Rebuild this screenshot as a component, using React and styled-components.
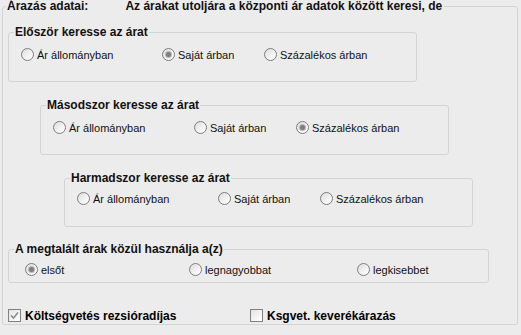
import React from 'react'
import styled, { createGlobalStyle } from 'styled-components'

const GlobalStyle = createGlobalStyle`
  * { box-sizing: border-box; }
  html, body {
    margin: 0;
    background: #ececec;
    font-family: "Liberation Sans", Arial, sans-serif;
    color: #000;
  }
`

const groups = [
  {
    title: 'Először keresse az árat',
    left: 5,
    top: 13,
    selected: 1,
    rowTop: 9,
    bottom: 20,
    options: ['Ár állományban', 'Saját árban', 'Százalékos árban'],
  },
  {
    title: 'Másodszor keresse az árat',
    left: 37,
    top: 17,
    selected: 2,
    rowTop: 9,
    bottom: 20,
    options: ['Ár állományban', 'Saját árban', 'Százalékos árban'],
  },
  {
    title: 'Harmadszor keresse az árat',
    left: 61,
    top: 17,
    selected: -1,
    rowTop: 7,
    bottom: 21,
    options: ['Ár állományban', 'Saját árban', 'Százalékos árban'],
  },
]

export default function App() {
  return (
    <>
      <GlobalStyle />
      <Outer>
        <OuterLegend>
          <span>Árazás adatai:</span>
          <LegendNote>Az árakat utoljára a központi ár adatok között keresi, de</LegendNote>
        </OuterLegend>

        {groups.map((g) => (
          <Group key={g.title} $left={g.left} $top={g.top} $width={409} $bottom={g.bottom}>
            <GroupLegend>{g.title}</GroupLegend>
            <Options $top={g.rowTop} $pad={12} $cols="141px 102px 1fr">
              {g.options.map((o, i) => (
                <Radio key={o} label={o} checked={i === g.selected} />
              ))}
            </Options>
          </Group>
        ))}

        <Group $left={5} $top={16} $width={481} $bottom={6}>
          <GroupLegend>A megtalált árak közül használja a(z)</GroupLegend>
          <Options $top={7} $pad={16} $cols="164px 168px 1fr">
            <Radio label="elsőt" checked />
            <Radio label="legnagyobbat" />
            <Radio label="legkisebbet" />
          </Options>
        </Group>

        <CheckRow>
          <Check checked label="Költségvetés rezsióradíjas" />
          <Check label="Ksgvet. keverékárazás" />
        </CheckRow>
      </Outer>
    </>
  )
}

function Radio({ label, checked }) {
  return (
    <RadioItem>
      <RadioCircle>{checked && <RadioDot />}</RadioCircle>
      <span>{label}</span>
    </RadioItem>
  )
}

function Check({ label, checked }) {
  return (
    <CheckItem>
      <CheckBox>
        {checked && (
          <svg width="9" height="9" viewBox="0 0 9 9">
            <path d="M1 4.5 L3.5 7 L8 1.5" fill="none" stroke="#8c8c8c" strokeWidth="1.6" />
          </svg>
        )}
      </CheckBox>
      <span>{label}</span>
    </CheckItem>
  )
}

const Outer = styled.fieldset`
  margin: 0 0 0 2px;
  padding: 0 0 2px 0;
  width: 516px;
  min-width: 0;
  border: 1px solid #d3d3d3;
  border-radius: 3px;
`

const OuterLegend = styled.legend`
  margin-left: 3px;
  padding: 0 2px 0 1px;
  font-size: 12px;
  font-weight: bold;
  line-height: 13px;
  color: #111;
`

const LegendNote = styled.span`
  margin-left: 37px;
`

const Group = styled.fieldset`
  margin: ${(p) => p.$top}px 0 0 ${(p) => p.$left}px;
  padding: 0 0 ${(p) => p.$bottom}px 0;
  width: ${(p) => p.$width}px;
  min-width: 0;
  border: 1px solid #d3d3d3;
  border-radius: 3px;
`

const GroupLegend = styled.legend`
  margin-left: 5px;
  padding: 0 1px;
  font-size: 12px;
  font-weight: bold;
  line-height: 13px;
  color: #111;
`

const Options = styled.div`
  display: grid;
  grid-template-columns: ${(p) => p.$cols};
  margin-top: ${(p) => p.$top}px;
  padding-left: ${(p) => p.$pad}px;
`

const RadioItem = styled.div`
  display: flex;
  align-items: center;
  gap: 3px;
  height: 13px;
  font-size: 11px;
  color: #111;
  white-space: nowrap;
`

const RadioCircle = styled.span`
  display: flex;
  align-items: center;
  justify-content: center;
  width: 13px;
  height: 13px;
  flex: none;
  border: 1px solid #7d7d7d;
  border-radius: 50%;
  background: linear-gradient(135deg, #dcdcdc 0%, #f4f4f4 60%, #ffffff 100%);
`

const RadioDot = styled.span`
  width: 5px;
  height: 5px;
  border-radius: 50%;
  background: #7e7e7e;
  box-shadow: 0 0 0 1px #b8b8b8;
`

const CheckRow = styled.div`
  display: grid;
  grid-template-columns: 242px 1fr;
  margin-top: 26px;
  padding-left: 5px;
`

const CheckItem = styled.div`
  display: flex;
  align-items: center;
  gap: 4px;
  height: 13px;
  font-size: 12px;
  font-weight: bold;
  color: #000;
  white-space: nowrap;
`

const CheckBox = styled.span`
  display: flex;
  align-items: center;
  justify-content: center;
  width: 13px;
  height: 13px;
  flex: none;
  border: 1px solid #808080;
  background: linear-gradient(135deg, #e2e2e2 0%, #f8f8f8 70%, #ffffff 100%);
`
